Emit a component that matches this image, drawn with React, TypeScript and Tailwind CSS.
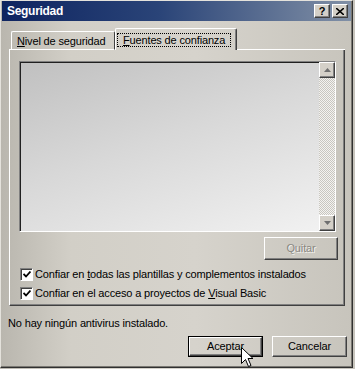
import React from "react";

const raised =
  "border border-t-white border-l-white border-r-[#404040] border-b-[#404040] shadow-[inset_-1px_-1px_#808080]";

function ScrollArrow({ dir }: { dir: "up" | "down" }) {
  return (
    <div className={`flex h-[16px] w-[16px] items-center justify-center bg-[#d4d0c8] ${raised}`}>
      <svg width="7" height="4" viewBox="0 0 7 4" aria-hidden="true">
        {dir === "up" ? (
          <path d="M3.5 0 L7 4 L0 4 Z" fill="#6f6f6f" />
        ) : (
          <path d="M0 0 L7 0 L3.5 4 Z" fill="#6f6f6f" />
        )}
      </svg>
    </div>
  );
}

function Check() {
  return (
    <div className="flex h-[13px] w-[13px] shrink-0 items-center justify-center border border-t-[#808080] border-l-[#808080] border-r-white border-b-white bg-white shadow-[inset_1px_1px_#404040]">
      <svg width="8" height="7" viewBox="0 0 8 7" aria-hidden="true">
        <path d="M0.5 3 L3 5.5 L7.5 0.5" stroke="#000" strokeWidth="1.8" fill="none" />
      </svg>
    </div>
  );
}

function Cursor() {
  return (
    <svg className="absolute left-[241px] top-[347px]" width="13" height="21" viewBox="0 0 13 21" aria-hidden="true">
      <path d="M0.5 0.5 L0.5 16.5 L4.5 12.5 L7.5 19.5 L10 18.5 L7 11.5 L12 11.5 Z" fill="#fff" stroke="#000" strokeWidth="1" />
    </svg>
  );
}

export default function App() {
  return (
    <div className="relative h-[369px] w-[355px] overflow-hidden bg-[linear-gradient(90deg,#b9b6ae_0%,#d2cfc7_20%,#d6d3cc_55%,#c7c4bc_100%)] font-['Liberation_Sans',Arial,sans-serif] text-[11px] tracking-[-0.15px] text-black">
      <div className="flex h-[368px] w-[353px] flex-col border border-t-[#e4e2dc] border-l-[#e4e2dc] border-r-[#303030] border-b-[#303030] px-[1px] shadow-[inset_-1px_-1px_#7a7872]">
        {/* title bar */}
        <div className="flex h-[20px] items-center justify-between bg-[linear-gradient(90deg,#0e2460_0%,#2a4478_45%,#8190a6_100%)] pl-[5px] pr-[3px]">
          <span className="text-[12px] font-bold tracking-[-0.3px] text-white">Seguridad</span>
          <div className="flex gap-[2px]">
            <div className={`flex h-[14px] w-[16px] items-center justify-center bg-[#d4d0c8] text-[11px] font-bold leading-none ${raised}`}>?</div>
            <div className={`flex h-[14px] w-[16px] items-center justify-center bg-[#d4d0c8] ${raised}`}>
              <svg width="8" height="7" viewBox="0 0 8 7" aria-hidden="true">
                <path d="M0 0 L8 7 M8 0 L0 7" stroke="#000" strokeWidth="1.6" />
              </svg>
            </div>
          </div>
        </div>

        {/* tabs */}
        <div className="ml-[7px] mt-[7px] flex h-[22px] w-[336px] items-end">
          <div className="h-[1px] w-[2px] bg-white" />
          <div className="flex h-[19px] w-[104px] items-center rounded-t-[2px] border border-b-white border-t-white border-l-white border-r-[#404040] pl-[5px] pt-[1px]">
            <span>
              <u>N</u>ivel de seguridad
            </span>
          </div>
          <div className="flex h-[22px] w-[122px] items-start rounded-t-[2px] border border-b-0 border-t-white border-l-white border-r-[#404040] pl-[1px] pt-[4px] shadow-[inset_-1px_0_#808080]">
            <span className="border border-dotted border-black px-[5px] leading-[12px]">
              <u>F</u>uentes de confianza
            </span>
          </div>
          <div className="h-[1px] flex-1 bg-white" />
        </div>

        {/* panel */}
        <div className="ml-[7px] flex h-[256px] w-[336px] flex-col border border-t-0 border-l-white border-r-[#404040] border-b-[#404040] pl-[9px] pr-[6px] pt-[11px] shadow-[inset_-1px_-1px_#808080]">
          <div className="flex h-[171px] w-[317px] border border-t-[#808080] border-l-[#808080] border-r-white border-b-white bg-[linear-gradient(160deg,#c0c0c0_0%,#d8d8d8_45%,#f2f2f2_100%)] shadow-[inset_1px_1px_#202020]">
            <div className="flex-1" />
            <div className="flex w-[16px] flex-col">
              <ScrollArrow dir="up" />
              <div className="flex-1 bg-[repeating-conic-gradient(#c8c6c0_0_25%,#f4f3f0_0_50%)] bg-[length:2px_2px]" />
              <ScrollArrow dir="down" />
            </div>
          </div>

          <div className="mt-[5px] flex justify-end">
            <div className={`flex h-[23px] w-[74px] items-center justify-center text-[#8a8882] [text-shadow:1px_1px_#f2f1ee] ${raised}`}>
              Quitar
            </div>
          </div>

          <div className="ml-[1px] mt-[8px] flex flex-col gap-[6px]">
            <div className="flex h-[13px] items-center gap-[2px]">
              <Check />
              <span>
                Confiar en <u>t</u>odas las plantillas y complementos instalados
              </span>
            </div>
            <div className="flex h-[13px] items-center gap-[2px]">
              <Check />
              <span>
                Confiar en el acceso a proyectos de <u>V</u>isual Basic
              </span>
            </div>
          </div>
        </div>

        <div className="ml-[6px] mt-[11px] leading-[13px]">No hay ningún antivirus instalado.</div>

        <div className="mr-[4px] mt-[6px] flex justify-end gap-[9px]">
          <div className="border border-black">
            <div className={`flex h-[19px] w-[73px] items-center justify-center ${raised}`}>Aceptar</div>
          </div>
          <div className={`flex h-[21px] w-[75px] items-center justify-center ${raised}`}>Cancelar</div>
        </div>
      </div>
      <Cursor />
    </div>
  );
}
